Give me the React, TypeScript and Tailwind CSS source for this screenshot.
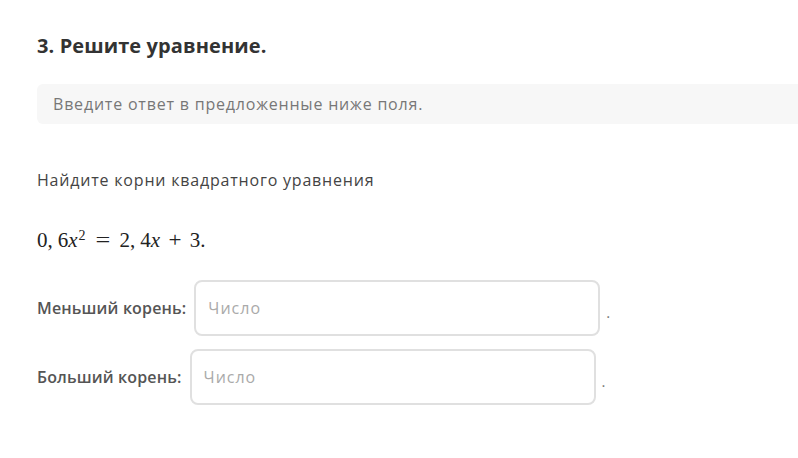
export default function App() {
  return (
    <div className="min-h-[458px] w-full overflow-hidden bg-white font-['Open_Sans',sans-serif] text-[#333]">
      <div className="pl-[37px] pt-[32px]">
        <h1 className="text-[20px] font-bold leading-[28px] tracking-[0.1px] text-[#333]">3. Решите уравнение.</h1>

        <div className="mt-[24px] -mr-4 flex h-[40px] items-center rounded-l-md bg-[#f7f7f7] pl-4 text-[16px] tracking-[0.8px] text-[#777]">
          Введите ответ в предложенные ниже поля.
        </div>

        <p className="mt-[45px] text-[16px] leading-[22px] tracking-[0.8px] text-[#444]">
          Найдите корни квадратного уравнения
        </p>

        <p className="mt-[37px] flex items-baseline font-['Liberation_Serif',serif] text-[21px] leading-[24px] text-[#222]">
          <span>0,</span>
          <span className="ml-[5px]">6</span>
          <i>x</i>
          <sup className="ml-[1px] text-[14px]">2</sup>
          <span className="mx-[11px] scale-x-125">=</span>
          <span>2,</span>
          <span className="ml-[5px]">4</span>
          <i>x</i>
          <span className="mx-[9px] scale-x-110">+</span>
          <span>3.</span>
        </p>

        <div className="mt-[28px] flex flex-col gap-[13px]">
          <AnswerRow label="Меньший корень:" />
          <AnswerRow label="Больший корень:" />
        </div>
      </div>
    </div>
  );
}

function AnswerRow({ label }: { label: string }) {
  return (
    <div className="flex items-center">
      <span className="mr-2 text-[16px] font-semibold tracking-[0.15px] text-[#555]">{label}</span>
      <input
        type="text"
        placeholder="Число"
        className="h-[56px] w-[406px] rounded-lg border-2 border-[#e0e0e0] px-3 text-[16px] tracking-[1px] outline-none placeholder:text-[#aaa]"
      />
      <span className="ml-[6px] mt-2 text-[15px] text-[#777]">.</span>
    </div>
  );
}
